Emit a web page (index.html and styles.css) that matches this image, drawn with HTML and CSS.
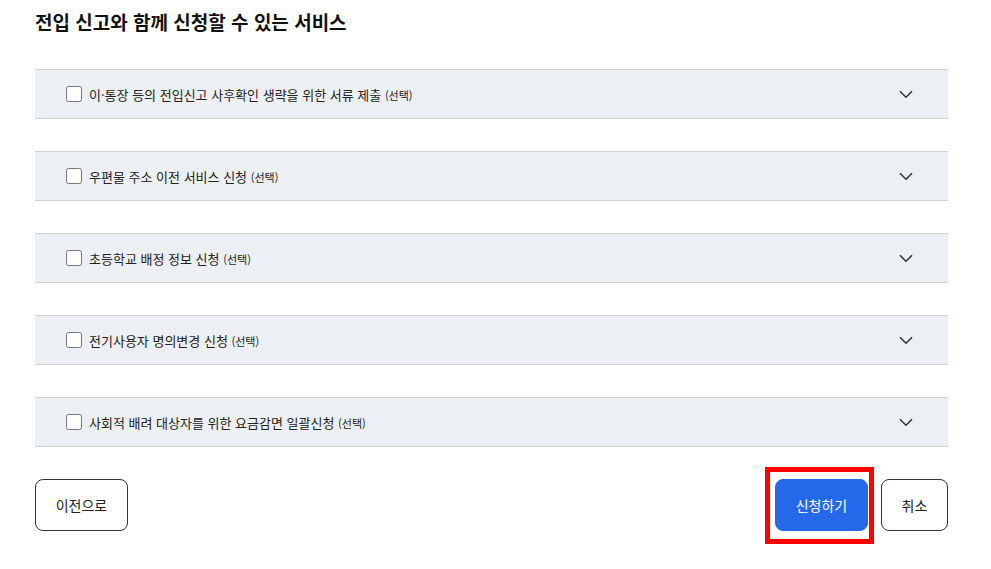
FILE: index.html
```html
<!DOCTYPE html>
<html lang="ko">
  <head>
    <meta charset="utf-8" />
    <title>전입 신고 서비스</title>
    <link rel="stylesheet" href="styles.css">
  </head>
  <body>
    <div class="page">
      <h2 class="title">전입 신고와 함께 신청할 수 있는 서비스</h2>

      <!-- 선택 서비스 목록 -->
      <div class="service-list">
        <div class="service-row">
          <label class="service-label">
            <input type="checkbox" class="service-check" />
            <span>이·통장 등의 전입신고 사후확인 생략을 위한 서류 제출 <small>(선택)</small></span>
          </label>
          <span class="chevron"><svg width="14" height="9" viewBox="0 0 14 9"><path d="M1 1.2 L7 7.2 L13 1.2" fill="none" stroke="#333" stroke-width="1.6"/></svg></span>
        </div>
        <div class="service-row">
          <label class="service-label">
            <input type="checkbox" class="service-check" />
            <span>우편물 주소 이전 서비스 신청 <small>(선택)</small></span>
          </label>
          <span class="chevron"><svg width="14" height="9" viewBox="0 0 14 9"><path d="M1 1.2 L7 7.2 L13 1.2" fill="none" stroke="#333" stroke-width="1.6"/></svg></span>
        </div>
        <div class="service-row">
          <label class="service-label">
            <input type="checkbox" class="service-check" />
            <span>초등학교 배정 정보 신청 <small>(선택)</small></span>
          </label>
          <span class="chevron"><svg width="14" height="9" viewBox="0 0 14 9"><path d="M1 1.2 L7 7.2 L13 1.2" fill="none" stroke="#333" stroke-width="1.6"/></svg></span>
        </div>
        <div class="service-row">
          <label class="service-label">
            <input type="checkbox" class="service-check" />
            <span>전기사용자 명의변경 신청 <small>(선택)</small></span>
          </label>
          <span class="chevron"><svg width="14" height="9" viewBox="0 0 14 9"><path d="M1 1.2 L7 7.2 L13 1.2" fill="none" stroke="#333" stroke-width="1.6"/></svg></span>
        </div>
        <div class="service-row">
          <label class="service-label">
            <input type="checkbox" class="service-check" />
            <span>사회적 배려 대상자를 위한 요금감면 일괄신청 <small>(선택)</small></span>
          </label>
          <span class="chevron"><svg width="14" height="9" viewBox="0 0 14 9"><path d="M1 1.2 L7 7.2 L13 1.2" fill="none" stroke="#333" stroke-width="1.6"/></svg></span>
        </div>
      </div>

      <!-- 하단 버튼 -->
      <div class="actions">
        <button type="button" class="btn">이전으로</button>
        <div class="actions-right">
          <span class="highlight">
            <button type="button" class="btn btn-primary">신청하기</button>
          </span>
          <button type="button" class="btn btn-small">취소</button>
        </div>
      </div>
    </div>
  </body>
</html>
```

FILE: styles.css
```css
body {
  margin: 0;
  background: #fff;
  font-family: "Noto Sans CJK KR", "Noto Sans", sans-serif;
  color: #1e1e1e;
}
.page {
  padding: 0 43px 38px 35px;
}
.title {
  margin: 0;
  padding-top: 9px;
  height: 60px;
  font-size: 19px;
  font-weight: 700;
  line-height: 26px;
  color: #111;
}
/* service list */
.service-list {
  display: flex;
  flex-direction: column;
  gap: 32px;
}
.service-row {
  display: flex;
  align-items: center;
  justify-content: space-between;
  height: 48px;
  padding: 0 35px 0 31px;
  background-color: #ecf0f4;
  border-top: 1px solid #cfd1d4;
  border-bottom: 1px solid #cfd1d4;
}
.service-label {
  display: flex;
  align-items: center;
  gap: 7px;
  font-size: 13px;
  color: #222;
}
.service-label small {
  font-size: 11px;
}
.service-check {
  width: 16px;
  height: 16px;
  margin: 0;
}
.chevron {
  display: flex;
}
/* buttons */
.actions {
  display: flex;
  justify-content: space-between;
  margin-top: 32px;
}
.actions-right {
  display: flex;
  gap: 13px;
}
.btn {
  width: 93px;
  height: 52px;
  border: 1px solid #333;
  border-radius: 8px;
  background: #fff;
  font-family: inherit;
  font-size: 14px;
  color: #222;
}
.btn-small {
  width: 67px;
}
.btn-primary {
  background: #2569ea;
  border-color: #2569ea;
  color: #fff;
}
.highlight {
  position: relative;
  display: flex;
}
.highlight::after {
  content: "";
  position: absolute;
  left: -10px;
  right: -6px;
  top: -12px;
  bottom: -13px;
  border: 5px solid #ff0000;
  pointer-events: none;
}
```
